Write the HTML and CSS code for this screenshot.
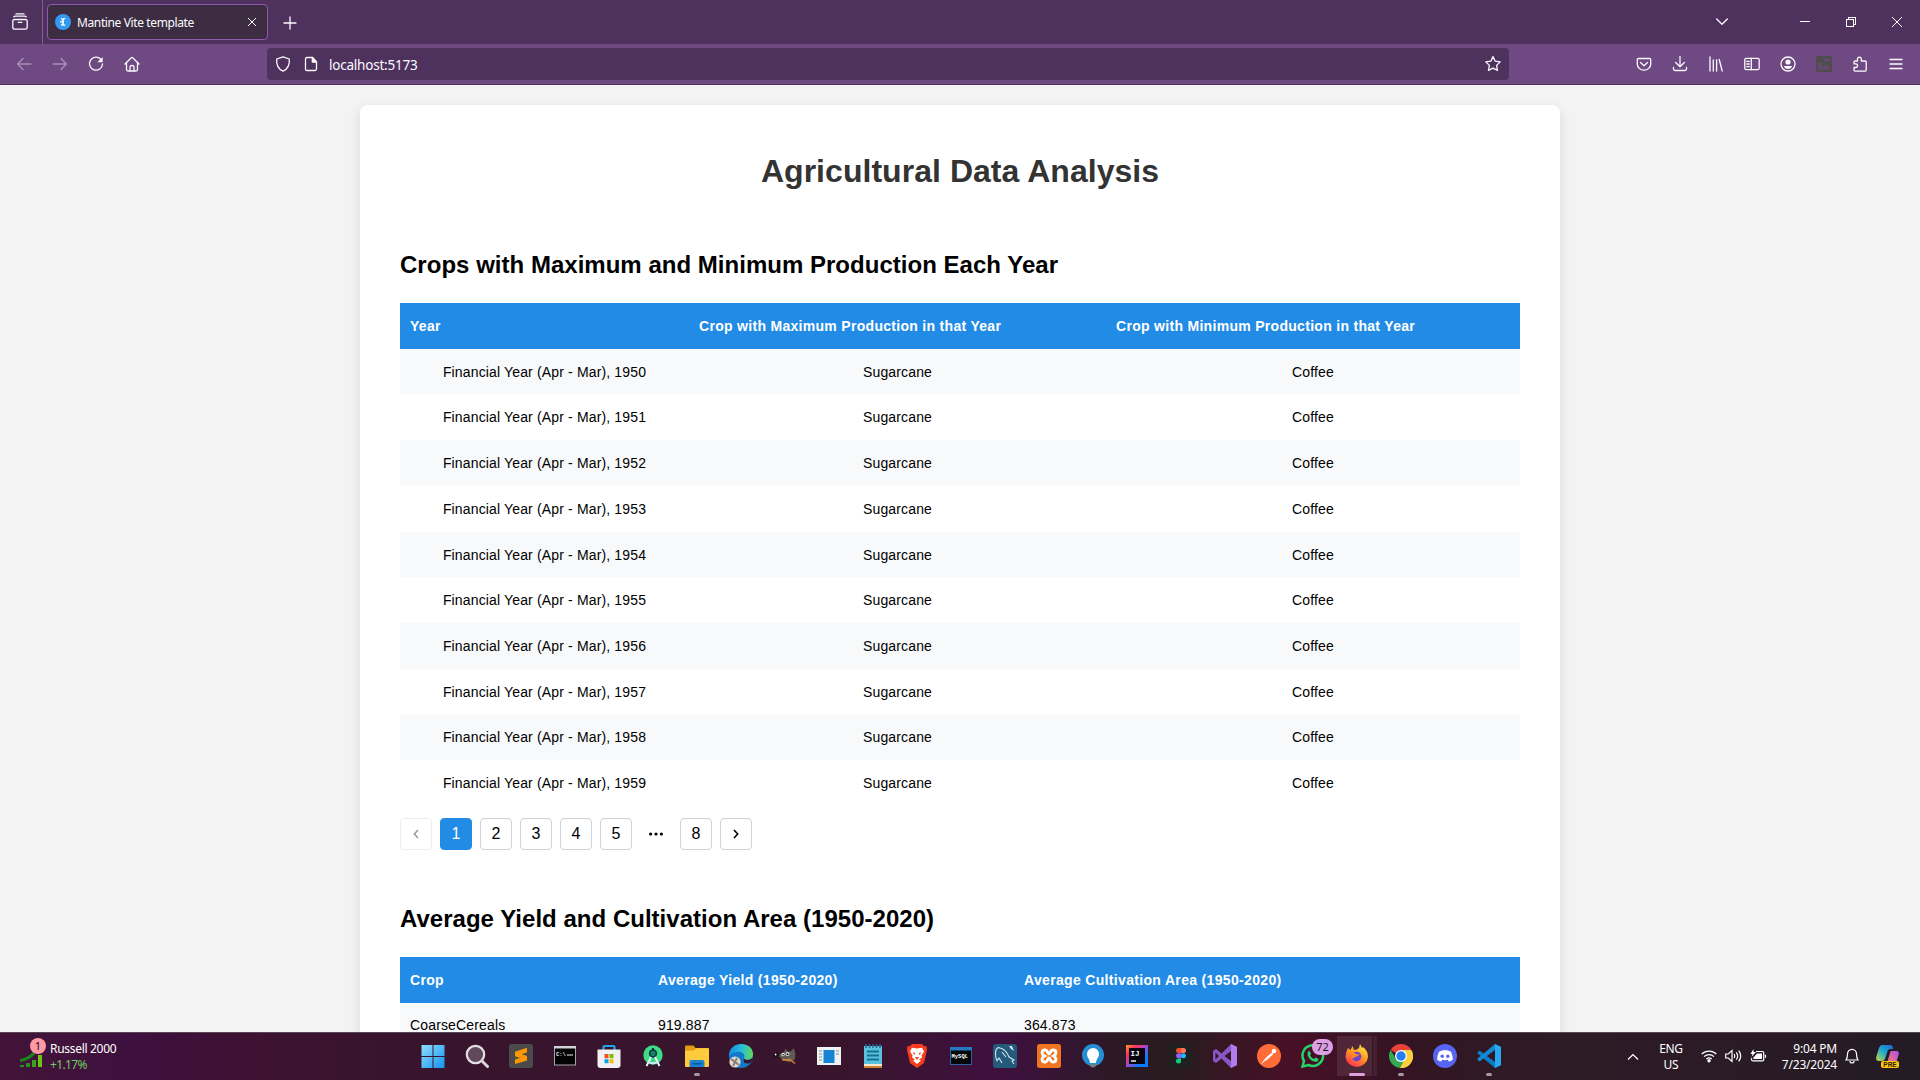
FILE: index.html
```html
<!DOCTYPE html>
<html lang="en">
<head>
<meta charset="utf-8">
<title>Mantine Vite template</title>
<link rel="stylesheet" href="styles.css">
</head>
<body>
<div class="screen">
  <header class="tabstrip">
    <div class="recent">
      <svg width="18" height="18" viewBox="0 0 18 18" class="line"><rect x="1.8" y="6.5" width="14.4" height="9.7" rx="1.8"/><path d="M2.8 3.8 4 3.2h10l1.2.6M5 .9h8M7.2 9.3h3.6"/></svg>
    </div>
    <div class="tab">
      <svg width="16" height="16" viewBox="0 0 16 16"><circle cx="8" cy="8" r="8" fill="#339af0"/><path d="M6 4.400q2.200.8 2.200 3.500T6 11.400M8 4.600h2.300M8 11.200h2.300M5 7.900h2.500" stroke="#fff" stroke-width="1.200" fill="none"/><path d="M8.200 5v6" stroke="#fff" stroke-width="1"/></svg>
      <span class="tab-title">Mantine Vite template</span>
      <svg width="10" height="10" viewBox="0 0 10 10" class="thin"><path d="M1 1l8 8M9 1 1 9"/></svg>
    </div>
    <svg class="newtab line" width="14" height="14" viewBox="0 0 14 14"><path d="M7 1v12M1 7h12"/></svg>
    <div class="window-controls">
      <span class="chev"><svg width="12" height="8" viewBox="0 0 12 8" class="line"><path d="M.7 1 6 6.300 11.300 1"/></svg></span>
      <span class="ctl"><svg width="10" height="10" viewBox="0 0 10 10" class="thin crisp"><path d="M0 4.500h10"/></svg></span>
      <span class="ctl"><svg width="10" height="10" viewBox="0 0 10 10" class="thin crisp"><path d="M.5 2.500h7v7h-7zM2.500 2V.5h7v7H8"/></svg></span>
      <span class="ctl"><svg width="10" height="10" viewBox="0 0 10 10" class="thin"><path d="M0 0l10 10M10 0 0 10"/></svg></span>
    </div>
  </header>

  <nav class="toolbar">
    <div class="nav-buttons">
      <span class="tb dim"><svg width="16" height="16" viewBox="0 0 16 16" class="line"><path d="M15 8H1.500M7 2.500 1.500 8 7 13.500"/></svg></span>
      <span class="tb dim"><svg width="16" height="16" viewBox="0 0 16 16" class="line"><path d="M1 8h13.500M9 2.500 14.500 8 9 13.500"/></svg></span>
      <span class="tb"><svg width="16" height="16" viewBox="0 0 16 16" class="line"><path d="M12.800 3.300A6.500 6.500 0 1 0 14.500 8"/><path d="M14.600 1v5.200H9.400z" fill="#fbfbfe" stroke="none"/></svg></span>
      <span class="tb"><svg width="16" height="16" viewBox="0 0 16 16" class="line"><path d="M1 8 7.300 1.700q.7-.6 1.400 0L15 8M2.500 7v6.500q0 1.500 1.500 1.500h8q1.500 0 1.500-1.500V7M6 15v-4q0-1.500 2-1.500t2 1.500v4"/></svg></span>
    </div>
    <div class="urlbar">
      <svg width="16" height="16" viewBox="0 0 16 16" class="line"><path d="M8 .8 14.300 3c.5 6-1.500 10-6.300 12.200C3.200 13 1.200 9 1.700 3z"/></svg>
      <svg width="14" height="16" viewBox="0 0 14 16" class="line page-icon"><path d="M3 1.500h5.500L12.500 6v7q0 1.500-1.500 1.500H3q-1.500 0-1.500-1.500V3q0-1.500 1.500-1.500z"/><path d="M8.300 1.500V6h4.200z" fill="#fbfbfe"/></svg>
      <span class="url">localhost:5173</span>
      <svg width="18" height="18" viewBox="0 0 18 18" class="line"><path d="M9 1.600l2.200 4.600 5 .7-3.600 3.500.9 5L9 13.100l-4.500 2.300.9-5L1.800 6.900l5-.7z"/></svg>
    </div>
    <div class="actions">
      <span class="tb"><svg width="16" height="16" viewBox="0 0 16 16" class="line"><path d="M2.500 2.500h11q1.200 0 1.200 1.200V8a6.700 6.200 0 0 1-13.400 0V3.700q0-1.200 1.200-1.200zM4.500 6.500 8 9.700l3.500-3.200"/></svg></span>
      <span class="tb"><svg width="16" height="16" viewBox="0 0 16 16" class="line"><path d="M8 .5v10M3.700 6.500 8 10.700l4.300-4.200M1.500 11.500V13q0 1.500 1.500 1.500h10q1.500 0 1.500-1.500v-1.500"/></svg></span>
      <span class="tb"><svg width="16" height="16" viewBox="0 0 16 16" class="line"><path d="M2 1v14M5.300 4v11M8.600 4v11M11.200 3.500 14.200 15"/></svg></span>
      <span class="tb"><svg width="16" height="16" viewBox="0 0 16 16" class="line"><rect x=".8" y="2.300" width="14.400" height="11.400" rx="1.500"/><path d="M7.300 2.500v11M2.800 5.400h2.500M2.800 8h2.500M2.800 10.600h2.500"/></svg></span>
      <span class="tb"><svg width="16" height="16" viewBox="0 0 16 16" class="line"><circle cx="8" cy="8" r="7"/><circle cx="8" cy="6" r="2.600" fill="#fbfbfe" stroke="none"/><path d="M4 10h8q-.5 3-4 3t-4-3z" fill="#fbfbfe" stroke="none"/></svg></span>
      <span class="tb"><svg width="16" height="16" viewBox="0 0 16 16"><rect width="16" height="16" rx="1" fill="#4d4d4f"/><path d="M8.500 2.500h3v3h-3zM11.500 4l2-1.500v3z" fill="#6d4a7c"/><text x="1.200" y="14" class="se">Se</text></svg></span>
      <span class="tb"><svg width="16" height="16" viewBox="0 0 16 16" class="line"><path d="M5.500 5V3a1.900 1.900 0 0 1 3.800 0v2H13q1.200 0 1.200 1.200V14q0 1.200-1.200 1.200H3.200Q2 15.200 2 14v-2.500h1.800a1.800 1.800 0 0 0 0-3.600H2V6q0-1 1.200-1z"/></svg></span>
      <span class="tb"><svg width="14" height="16" viewBox="0 0 14 16" class="line"><path d="M1 3.500h12M1 8h12M1 12.500h12"/></svg></span>
    </div>
  </nav>

  <main class="viewport">
    <div class="card">
      <h1>Agricultural Data Analysis</h1>
      <h2>Crops with Maximum and Minimum Production Each Year</h2>
      <table class="data yearly">
        <colgroup><col class="y1"><col class="y2"><col class="y3"></colgroup>
        <thead><tr><th>Year</th><th>Crop with Maximum Production in that Year</th><th>Crop with Minimum Production in that Year</th></tr></thead>
        <tbody>
          <tr><td>Financial Year (Apr - Mar), 1950</td><td>Sugarcane</td><td>Coffee</td></tr>
          <tr><td>Financial Year (Apr - Mar), 1951</td><td>Sugarcane</td><td>Coffee</td></tr>
          <tr><td>Financial Year (Apr - Mar), 1952</td><td>Sugarcane</td><td>Coffee</td></tr>
          <tr><td>Financial Year (Apr - Mar), 1953</td><td>Sugarcane</td><td>Coffee</td></tr>
          <tr><td>Financial Year (Apr - Mar), 1954</td><td>Sugarcane</td><td>Coffee</td></tr>
          <tr><td>Financial Year (Apr - Mar), 1955</td><td>Sugarcane</td><td>Coffee</td></tr>
          <tr><td>Financial Year (Apr - Mar), 1956</td><td>Sugarcane</td><td>Coffee</td></tr>
          <tr><td>Financial Year (Apr - Mar), 1957</td><td>Sugarcane</td><td>Coffee</td></tr>
          <tr><td>Financial Year (Apr - Mar), 1958</td><td>Sugarcane</td><td>Coffee</td></tr>
          <tr><td>Financial Year (Apr - Mar), 1959</td><td>Sugarcane</td><td>Coffee</td></tr>
        </tbody>
      </table>
      <div class="pagination">
        <button class="page disabled"><svg width="16" height="16" viewBox="0 0 16 16"><path d="M10 4 6.300 8l3.700 4" fill="none" stroke="currentColor" stroke-width="1.500"/></svg></button>
        <button class="page active">1</button>
        <button class="page">2</button>
        <button class="page">3</button>
        <button class="page">4</button>
        <button class="page">5</button>
        <span class="dots"><svg width="16" height="16" viewBox="0 0 16 16"><circle cx="2.600" cy="8" r="1.600"/><circle cx="8" cy="8" r="1.600"/><circle cx="13.400" cy="8" r="1.600"/></svg></span>
        <button class="page">8</button>
        <button class="page"><svg width="16" height="16" viewBox="0 0 16 16"><path d="M6 4l3.700 4L6 12" fill="none" stroke="currentColor" stroke-width="1.600"/></svg></button>
      </div>
      <h2>Average Yield and Cultivation Area (1950-2020)</h2>
      <table class="data averages">
        <colgroup><col class="a1"><col class="a2"><col class="a3"></colgroup>
        <thead><tr><th>Crop</th><th>Average Yield (1950-2020)</th><th>Average Cultivation Area (1950-2020)</th></tr></thead>
        <tbody><tr><td>CoarseCereals</td><td>919.887</td><td>364.873</td></tr></tbody>
      </table>
    </div>
  </main>

  <footer class="taskbar">
    <div class="widget">
      <div class="widget-icon">
        <svg width="26" height="30" viewBox="0 0 26 30"><path d="M0 22.500Q9 21 14 15" stroke="#17871b" stroke-width="3" fill="none"/><path d="M0 27h4v2H0zM6 25h4v4H6z" fill="#249022"/><path d="M12 22h4v7h-4z" fill="#37a51b"/><path d="M18 17h4v12h-4z" fill="#6cc60e"/></svg>
        <span class="widget-badge">1</span>
      </div>
      <div class="widget-text"><span>Russell 2000</span><span class="up">+1.17%</span></div>
    </div>

    <div class="apps">
      <span class="app"><svg width="24" height="24" viewBox="0 0 24 24"><defs><linearGradient id="win" x1="0" y1="0" x2="1" y2="1"><stop offset="0" stop-color="#8fe0fb"/><stop offset="1" stop-color="#1492f0"/></linearGradient></defs><path d="M.5 1h11v11H.5zM12.500 1h11v11h-11zM.5 13h11v11H.5zM12.500 13h11v11h-11z" fill="url(#win)"/></svg></span>
      <span class="app"><svg width="24" height="24" viewBox="0 0 24 24"><circle cx="10.500" cy="10.500" r="8.700" fill="#62485b" stroke="#e4e0e4" stroke-width="2.200"/><path d="M17 17l5.500 5.500" stroke="#d8d4d8" stroke-width="3" stroke-linecap="round"/></svg></span>
      <span class="app"><svg width="24" height="24" viewBox="0 0 24 24"><rect width="24" height="24" rx="2" fill="#4b4a4b"/><path d="M18 3.800v4.700L6 12.300V7.800zM6 7.800l12 4.300v4.300L6 12.300zM18 12.100v4.300L6 20v-4.500z" fill="#ff9800"/></svg></span>
      <span class="app"><svg width="24" height="24" viewBox="0 0 24 24"><rect x="1.500" y="2.500" width="21" height="18.500" fill="#030303" stroke="#a4a4a8"/><path d="M1 2h22v2.500H1z" fill="#cfd3d8"/><text x="3" y="11.500" class="micro" fill="#eee">C:\</text><path d="M14 11h6" stroke="#eee"/></svg></span>
      <span class="app"><svg width="24" height="24" viewBox="0 0 24 24"><path d="M6.500 6V3q0-1 1-1h9q1 0 1 1v3" fill="none" stroke="#20a5e8" stroke-width="2.200"/><path d="M.5 5.500h23V21q0 3-3 3h-17q-3 0-3-3z" fill="#f1f1f4"/><path d="M7.500 10h4v4.200h-4z" fill="#f25022"/><path d="M12.500 10h4v4.200h-4z" fill="#7fba00"/><path d="M7.500 15.200h4v4h-4z" fill="#00a4ef"/><path d="M12.500 15.200h4v4h-4z" fill="#ffb900"/></svg></span>
      <span class="app"><svg width="24" height="24" viewBox="0 0 24 24"><circle cx="12" cy="11" r="9.700" fill="#3ddc84"/><path d="M11 4h2v2h-2z" fill="#073042"/><circle cx="12" cy="9.500" r="3.400" fill="#1c8060" stroke="#073042" stroke-width="1.500"/><path d="M10 13 5.500 22M14 13l4.500 9" stroke="#e8f3ff" stroke-width="1.900"/><path d="M7 17.500q5 3.500 10 0" stroke="#d6e7fb" stroke-width="1.800" fill="none"/></svg></span>
      <span class="app"><svg width="24" height="24" viewBox="0 0 24 24"><path d="M0 2.500q0-1 1-1h7.500l2 2.500H23q1 0 1 1V10H0z" fill="#e39b13"/><path d="M0 6.500h8.500L11 4.300h12q1 0 1 1V22q0 1-1 1H1q-1 0-1-1z" fill="#fecb3e"/><path d="M4.500 23v-5q0-2 2-2h11q2 0 2 2v5z" fill="#1982d2"/><path d="M7 19h10v1.500H7z" fill="#0a579f"/></svg><i class="dot"></i></span>
      <span class="app"><svg width="24" height="24" viewBox="0 0 24 24"><defs><linearGradient id="edge" x1="0" y1=".4" x2="1" y2="0.500"><stop offset="0" stop-color="#168be0"/><stop offset=".5" stop-color="#28bddb"/><stop offset="1" stop-color="#60d95b"/></linearGradient></defs><circle cx="12" cy="12" r="12" fill="#1279c8"/><path d="M0 11C1-4 24-3 24 10c0 6-6 7-9.500 5 3-4-1.500-8-6-7Q3 8 0 12z" fill="url(#edge)"/><path d="M14.500 14.500Q18 17.500 24 14q-1 3-3 5-3 1-6-.500z" fill="#38152c"/><circle cx="6" cy="18" r="5.600" fill="#ddd9d0"/><path d="M2 15l8 6M4 22l4-8" stroke="#837a72" stroke-width="1.800"/></svg></span>
      <span class="app"><svg width="24" height="24" viewBox="0 0 24 24"><path d="M2 10q6 1 9-2 1-3 2-3l2 3q4-1 6-4 2 6 1 11-5 5-9 2-4-1-6-4-4 0-5-3z" fill="#5f5b54"/><circle cx="10" cy="10.500" r="1.700" fill="#eee"/><circle cx="14.500" cy="10" r="2" fill="#ddd"/><circle cx="10" cy="10.700" r=".8"/><circle cx="14.500" cy="10.200" r=".9"/><ellipse cx="3.500" cy="11" rx="3" ry="2.300" fill="#171514"/><circle cx="2.600" cy="10.500" r=".9" fill="#fff"/><path d="M9 15.500q4 1 8 0l5 4" stroke="#d98336" stroke-width="1.600" fill="none"/></svg></span>
      <span class="app"><svg width="24" height="24" viewBox="0 0 24 24"><rect y="3" width="24" height="18" fill="#f0f1f2"/><rect x="6.500" y="6" width="11" height="13" fill="#1684d5"/><path d="M2 7h3M2 10h3M2 13h3M2 16h3M19 7h3M19 10h3" stroke="#8a9299"/></svg></span>
      <span class="app"><svg width="24" height="24" viewBox="0 0 24 24"><path d="M3 20h18v4H3z" fill="#ca8436"/><path d="M3 19.500h18V22H3z" fill="#f7e8cf"/><path d="M3 2h18v18H3z" fill="#58c1de"/><path d="M5 0v4M8.500 0v4M12 0v4M15.500 0v4M19 0v4" stroke="#246b8a" stroke-width="1.500"/><path d="M6 7.500h12M6 11.500h12M6 15.500h12" stroke="#15708e" stroke-width="1.800"/></svg></span>
      <span class="app"><svg width="24" height="24" viewBox="0 0 24 24"><path d="M7 0h10l2 2.200 2.500-.2L22 6l-3 13-7 5-7-5L2 6l.500-4 2.500.2z" fill="#f73d1d"/><path d="M12 4.500l5-.8 2 3.800-2.500 4 .5 2-3 2 2 1-4 3.500L8 16.500l2-1-3-2 .500-2L5 7.500l2-3.800z" fill="#fff"/><path d="M8 8l2.500 1.500L9 11zM16 8l-2.500 1.500L15 11zM10 13h4l-2 3z" fill="#f73d1d"/></svg></span>
      <span class="app"><svg width="24" height="24" viewBox="0 0 24 24"><rect x="1.500" y="3.500" width="21" height="17" fill="#040506" stroke="#27649e"/><path d="M1 3h22v3.500H1z" fill="#2777c1"/><text x="2.500" y="13.500" class="micro" fill="#fff">MySQL</text></svg></span>
      <span class="app"><svg width="24" height="24" viewBox="0 0 24 24"><rect width="24" height="24" rx="3" fill="#245a7c"/><path d="M4 17C1 9 3 2 7 4c5 1 7 4 9 9l5 3-2 1 2 3M4 17l2-3 3 5M9 8l4 5" fill="none" stroke="#d5e5ef" stroke-width="1.100"/><path d="M16 2l2 3 3 2-2-5z" fill="#d5e5ef"/></svg></span>
      <span class="app"><svg width="24" height="24" viewBox="0 0 24 24"><rect width="24" height="24" rx="2.500" fill="#ee7421"/><path d="M8 6c-4 0-3.500 4.500-.5 6-3 1.500-3.500 6 .500 6 3 0 2.500-4 4-4s1 4 4 4c4 0 3.500-4.500.5-6 3-1.500 3.500-6-.5-6-3 0-2.500 4-4 4s-1-4-4-4z" fill="none" stroke="#fff" stroke-width="2.900"/></svg></span>
      <span class="app"><svg width="24" height="24" viewBox="0 0 24 24"><circle cx="12" cy="11" r="11" fill="#248fd2"/><path d="M9 19c0-4-3-5-3-9a6 6 0 0 1 12 0c0 4-3 5-3 9z" fill="#fff"/><path d="M9 20h6v2q-3 3-6 0z" fill="#747b81"/></svg></span>
      <span class="app"><svg width="24" height="24" viewBox="0 0 24 24"><defs><linearGradient id="ij" x1="0" y1="0" x2="1" y2="1"><stop offset="0" stop-color="#ff9a30"/><stop offset=".25" stop-color="#fe315d"/><stop offset=".5" stop-color="#9b48d9"/><stop offset=".75" stop-color="#087cfa"/></linearGradient></defs><rect x="1" y="1" width="22" height="22" fill="url(#ij)"/><rect x="4" y="4" width="16" height="16" fill="#080511"/><text x="5.500" y="12" class="ij" fill="#fff">IJ</text><path d="M6 17h5" stroke="#ddd" stroke-width="1.600"/></svg></span>
      <span class="app"><svg width="24" height="24" viewBox="0 0 24 24"><rect width="24" height="24" rx="1" fill="#202020"/><path d="M12 4H9.500a2.400 2.400 0 0 0 0 5H12z" fill="#f24e1e"/><path d="M12 4h2.500a2.400 2.400 0 0 1 0 5H12z" fill="#ff7262"/><path d="M12 9.200H9.500a2.400 2.400 0 0 0 0 5H12z" fill="#a259ff"/><circle cx="14.400" cy="11.700" r="2.500" fill="#1abcfe"/><path d="M12 14.500H9.500a2.500 2.500 0 1 0 2.500 2.500z" fill="#0acf83"/></svg></span>
      <span class="app"><svg width="24" height="24" viewBox="0 0 24 24"><path d="M18 0l6 3v18l-6 3L8.500 14.500 3 19l-3-2V7l3-2 5.500 4.500zM18 7l-6.500 5 6.500 5zM2.500 8.500v7L6 12z" fill="#8956c8" fill-rule="evenodd"/><path d="M18 0l6 3v18l-6 3z" fill="#b07af0"/></svg></span>
      <span class="app"><svg width="24" height="24" viewBox="0 0 24 24"><circle cx="12" cy="12" r="12" fill="#ff6c37"/><path d="M6 17.500l3-4 6-5 1.500 1.500-5.500 5-3 2z" fill="#fff"/><circle cx="17" cy="7" r="2.300" fill="#fff"/><path d="M4.500 19.500l12-12" stroke="#fff"/></svg></span>
      <span class="app"><svg width="24" height="24" viewBox="0 0 24 24"><path d="M1.500 22.500 3 17A10.300 10.300 0 1 1 7.500 21z" fill="none" stroke="#25d366" stroke-width="2.500"/><path d="M8 6.500l2 3-1 2q1.500 2.500 4 3.500l1.500-1.500 3 1.500c0 3-3 3.500-6 2C7 14.500 5 9 8 6.500z" fill="#25d366"/></svg><b class="count">72</b></span>
      <span class="app focused"><svg width="24" height="24" viewBox="0 0 24 24"><defs><linearGradient id="ff" x1=".8" y1="0" x2=".2" y2="1"><stop offset="0" stop-color="#fff044"/><stop offset=".45" stop-color="#ff9b20"/><stop offset="1" stop-color="#ff2858"/></linearGradient></defs><path d="M3 4l2.500 2 2-4 1.500 4q3 0 5-2l1-4 2 4 1-1q5 4 5 10a11.300 11 0 0 1-22.500 0Q.5 8 3 4z" fill="url(#ff)"/><circle cx="11.500" cy="12.500" r="4.800" fill="#7243c8"/><path d="M5 8q5 0 6 2l4 .5q-2 1-3 2-3 0-3 2-3 0-4-6z" fill="#ff8a24"/></svg><i class="dot wide"></i></span>
      <span class="app"><svg width="24" height="24" viewBox="0 0 24 24"><path d="M12 12 1.600 6A12 12 0 0 1 22.400 6z" fill="#e9423a"/><path d="M12 12H24A12 12 0 0 1 11.500 24z" fill="#fdd03b"/><path d="M22.400 6H12v6l-1 12A12 12 0 0 0 22.400 6z" fill="#fdd03b"/><path d="M1.600 6A12 12 0 0 0 11 24l5-9-9.500-1z" fill="#34a853"/><circle cx="12" cy="12" r="6" fill="#fff"/><circle cx="12" cy="12" r="4.700" fill="#267ff1"/></svg><i class="dot"></i></span>
      <span class="app"><svg width="24" height="24" viewBox="0 0 24 24"><circle cx="12" cy="12" r="12" fill="#5865f2"/><path d="M9 6.500q3-.8 6 0l3 1.200q2 4 1.800 8-2 1.800-4 1.800l-1-1.700q-3 .8-5.600 0l-1 1.700q-2 0-4-1.800-.2-4 1.800-8z" fill="#fff"/><circle cx="9.200" cy="12.300" r="1.700" fill="#5865f2"/><circle cx="14.800" cy="12.300" r="1.700" fill="#5865f2"/></svg></span>
      <span class="app"><svg width="24" height="24" viewBox="0 0 24 24"><path d="M18 0l6 3v18l-6 3L0 9l2.500-2.500L18 18z" fill="#0b7cc8"/><path d="M18 6 2.500 17.500 0 15 18 0z" fill="#1588d1"/><path d="M18 0l6 3v18l-6 3z" fill="#27a8f1"/></svg><i class="dot"></i></span>
    </div>

    <div class="tray">
      <svg class="tray-up" width="12" height="8" viewBox="0 0 12 8"><path d="M1 6.500l5-5 5 5"/></svg>
      <div class="lang"><span>ENG</span><span>US</span></div>
      <div class="status">
        <svg width="16" height="14" viewBox="0 0 16 14"><path d="M.7 5a10.500 10.500 0 0 1 14.600 0M3 7.600a7.300 7.300 0 0 1 10 0M5.300 10a4 4 0 0 1 5.400 0"/><circle cx="8" cy="11.800" r="1.100" fill="#fff"/></svg>
        <svg width="17" height="14" viewBox="0 0 17 14"><path d="M.7 5h2.500L7 1.500v11L3.200 9H.7zM9 5q1.400 2 0 4M11.300 3.300q2.700 3.700 0 7.400M13.700 1.700q4 5.300 0 10.600"/></svg>
        <svg width="17" height="14" viewBox="0 0 17 14"><path d="M6 2.500h6.500q1.200 0 1.200 1.200v7q0 1.200-1.200 1.200H3q-1.500 0-1.500-1.500V9M15.500 5.700v3"/><path d="M7 4.500h5v5.600H3.500V8.500z" fill="#fff" stroke="none"/><path d="M3.500 0 .5 5h2l-1 3 4.500-5H3.500z" fill="#fff" stroke="none"/></svg>
      </div>
      <div class="clock"><span>9:04 PM</span><span>7/23/2024</span></div>
      <svg class="bell" width="14" height="16" viewBox="0 0 14 16"><path d="M1 12q1.500-2 1.500-6a4.500 4.700 0 0 1 9 0q0 4 1.500 6zM5 13q0 2 2 2t2-2"/></svg>
      <div class="copilot">
        <svg width="24" height="24" viewBox="0 0 24 24"><defs><linearGradient id="cpa" x1="1" y1="0" x2="0" y2="1"><stop offset="0" stop-color="#1868d8"/><stop offset=".5" stop-color="#20a9ce"/><stop offset="1" stop-color="#c8d938"/></linearGradient><linearGradient id="cpb" x1="1" y1="0" x2="0" y2="1"><stop offset="0" stop-color="#a94ef0"/><stop offset="1" stop-color="#ff7d65"/></linearGradient></defs><path d="M6 1h8q3 0 3 4h-3q-2 0-3 4l-2 6q-.6 2-3 2H3q-4 0-2.500-5L3 4q1-3 3-3z" fill="url(#cpa)"/><path d="M15 7h5q4 0 2.500 4L20 19h-9l3-10q.3-2 1-2z" fill="url(#cpb)"/></svg>
        <b class="pre">PRE</b>
      </div>
    </div>
  </footer>
</div>
</body>
</html>
```
FILE: styles.css
```css
* { box-sizing: border-box; }
body { margin: 0; font-family: "Liberation Sans", Arial, sans-serif; color: #000; }
svg { display: block; flex: none; }
.screen { width: 1920px; height: 1080px; display: grid; grid-template-rows: 44px 41px 947px 48px; overflow: hidden; }

.line { fill: none; stroke: #fbfbfe; stroke-width: 1.3; stroke-linecap: round; stroke-linejoin: round; }
.thin { fill: none; stroke: #fff; stroke-width: 1; }
.crisp { shape-rendering: crispEdges; }

/* Tab strip */
.tabstrip { display: flex; align-items: center; background: #4f315e; font-family: "Noto Sans", sans-serif; }
.recent { width: 43px; height: 44px; padding: 0 0 0 11px; display: flex; align-items: center; border-right: 1px solid #7c6289; }
.tab { width: 221px; height: 36px; margin-left: 4px; padding: 0 10px 0 7px; display: flex; align-items: center; background: #3c2d42; border: 1px solid #9059ae; border-radius: 4px; }
.tab-title { flex: 1; margin-left: 6px; padding-top: 1px; color: #fbfbfe; font-size: 12px; letter-spacing: -0.38px; white-space: nowrap; }
.newtab { margin-left: 15px; margin-top: 1px; }
.window-controls { margin-left: auto; display: flex; align-items: center; }
.chev { width: 12px; margin-right: 54px; }
.ctl { width: 46px; display: flex; justify-content: center; }

/* Navigation toolbar */
.toolbar { display: flex; align-items: center; background: #6f4a82; border-bottom: 1px solid #4f315e; font-family: "Noto Sans", sans-serif; }
.nav-buttons { width: 261px; padding-left: 6px; margin-right: 6px; display: flex; }
.tb { width: 36px; display: flex; justify-content: center; }
.dim { opacity: .4; }
.urlbar { width: 1242px; height: 32px; padding: 0 7px 0 8px; display: flex; align-items: center; background: #4f315e; border-radius: 4px; }
.page-icon { margin-left: 13px; }
.url { flex: 1; margin-left: 11px; padding-top: 2px; color: #fbfbfe; font-size: 13.500px; letter-spacing: -0.22px; }
.actions { margin-left: auto; padding-right: 6px; display: flex; align-items: center; }
.se { fill: #6d4a7c; font: bold 9px "DejaVu Sans", sans-serif; letter-spacing: -0.5px; }

/* Page */
.viewport { background: #f3f3f3; overflow: hidden; padding-top: 20px; }
.card { width: 1200px; height: 1400px; margin: 0 auto; padding: 40px; background: #fff; border-radius: 8px; box-shadow: 0 4px 12px rgba(0, 0, 0, .1); }
h1 { margin: 0; height: 53px; font-size: 32px; line-height: 52px; letter-spacing: .04px; text-align: center; color: #333; }
h2 { margin: 0; font-size: 24px; line-height: 39px; letter-spacing: .02px; }
h1 + h2 { margin: 47px 0 19px; }
.pagination + h2 { margin: 49px 0 19px; }
.data { width: 1120px; table-layout: fixed; border-collapse: collapse; font-size: 14px; line-height: 21.700px; }
.data th { padding: 13px 10px 11px; text-align: left; letter-spacing: .3px; color: #fff; background: #228be6; }
.data td { padding: 13px 10px 11px; letter-spacing: .15px; }
.data tbody tr:nth-child(odd) { background: #f8f9fa; }
.yearly td { text-align: center; }
.averages th { padding: 12px 10px; line-height: 22px; letter-spacing: .33px; }
.averages td { padding: 12px 10px; }
.y1 { width: 289px; }
.y2 { width: 417px; }
.y3 { width: 414px; }
.a1 { width: 248px; }
.a2 { width: 366px; }
.a3 { width: 506px; }

.pagination { margin-top: 12px; display: flex; gap: 8px; }
.page, .dots { width: 32px; height: 32px; display: flex; align-items: center; justify-content: center; }
.page { padding: 0; background: #fff; border: 1px solid #ced4da; border-radius: 4px; color: #000; font: 16px/30px "Liberation Sans", Arial, sans-serif; }
.page.active { background: #228be6; border-color: #228be6; color: #fff; }
.page.disabled { opacity: .4; }

/* Taskbar */
.taskbar { display: flex; align-items: center; border-top: 1px solid #584555; color: #fff; font: 12px/16px "Noto Sans", sans-serif;
  background: linear-gradient(90deg, #431438 0, #3e103f 130px, #3d1232 260px, #38152c 400px, #38152c 840px, #3f103f 1000px, #2a1a23 1130px, #2a1b20 1180px, #481027 1290px, #361323 1390px, #2e1a24 1500px, #2b1b27 1700px, #231b25 1920px); }
.widget { width: 411px; padding-left: 20px; display: flex; align-items: center; }
.widget-icon { position: relative; width: 26px; height: 30px; margin-right: 4px; margin-top: -7px; }
.widget-badge { position: absolute; left: 10px; top: 0; width: 16px; height: 16px; border-radius: 50%; background: #ff99a4; color: #111; font-size: 11px; text-align: center; }
.widget-text { display: flex; flex-direction: column; letter-spacing: -0.3px; }
.up { letter-spacing: -0.65px; color: #6ccb5f; }
.apps { display: flex; height: 47px; padding-top: 3px; }
.app { position: relative; width: 44px; height: 40px; display: flex; align-items: center; justify-content: center; padding-bottom: 1px; }
.dot { position: absolute; bottom: 0; left: 19px; width: 6px; height: 3px; border-radius: 2px; background: #a39aa1; }
.dot.wide { left: 14px; width: 16px; background: #df9fe0; }
.focused { border-radius: 4px; background: linear-gradient(rgba(255, 255, 255, .09), rgba(255, 255, 255, .09)) 2px 0 / 35px 40px no-repeat, linear-gradient(rgba(255, 255, 255, .06), rgba(255, 255, 255, .06)) 38px 0 / 4px 40px no-repeat; }
.count { position: absolute; left: 21px; top: 3px; width: 21px; height: 16px; border-radius: 8px; background: #df9fe5; color: #171217; font-weight: 400; font-size: 11px; text-align: center; }
.micro { font: bold 5.500px "Liberation Mono", monospace; }
.ij { font: bold 7.500px "Liberation Mono", monospace; }

.tray { margin-left: auto; display: flex; align-items: center; }
.tray svg { fill: none; }
.tray-up, .bell, .status svg { stroke: #fff; stroke-width: 1.200; }
.tray-up { margin-right: 15px; }
.lang { width: 34px; display: flex; flex-direction: column; align-items: center; letter-spacing: -0.3px; padding-top: 1px; }
.status { display: flex; gap: 8px; margin: -1px 0 0 13px; }
.clock { width: 70px; display: flex; flex-direction: column; align-items: flex-end; letter-spacing: -0.2px; }
.bell { margin: -2px 0 0 8px; }
.copilot { position: relative; width: 24px; margin: -1px 20px 0 17px; }
.pre { position: absolute; left: 5px; bottom: 0; width: 18px; height: 7px; border-radius: 2px; background: #ffc40c; color: #2a1c00; font: bold 6.500px/7px "Liberation Sans", sans-serif; text-align: center; }
```
